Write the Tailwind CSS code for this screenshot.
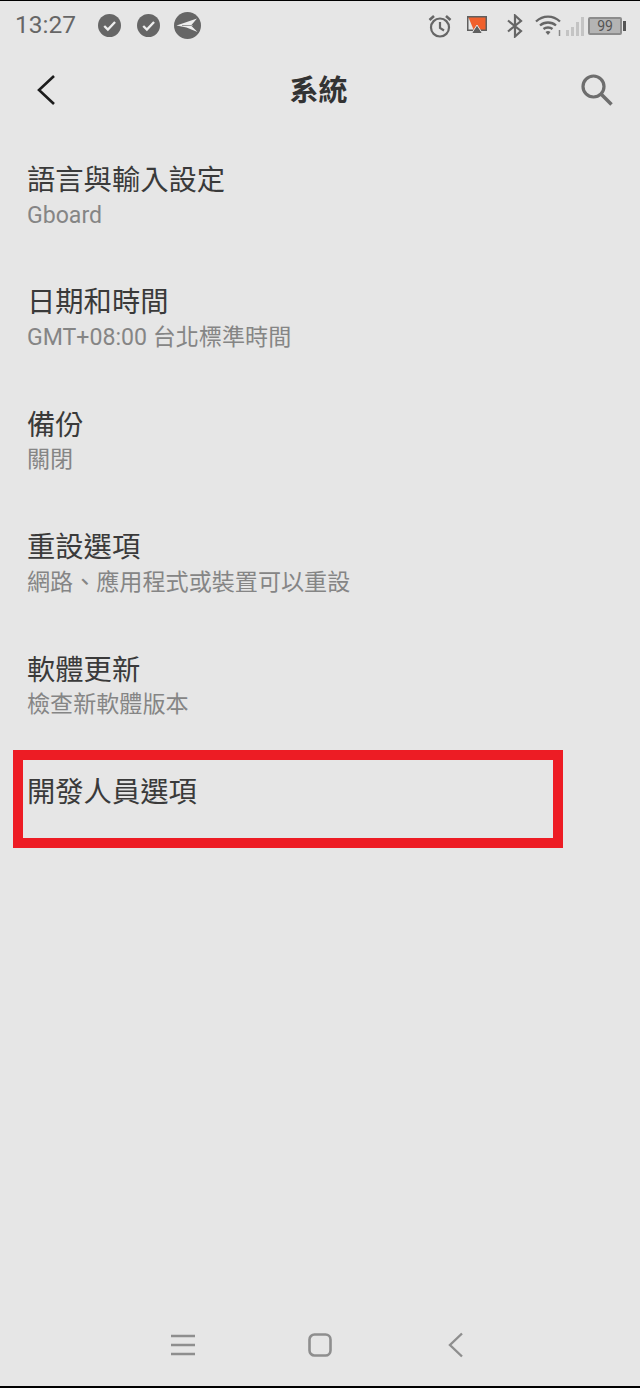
<!DOCTYPE html>
<html lang="zh-Hant">
<head>
<meta charset="utf-8">
<script src="https://cdn.jsdelivr.net/npm/@tailwindcss/browser@4"></script>
</head>
<body class="m-0">
<div class="relative w-[640px] h-[1388px] overflow-hidden flex flex-col bg-[#e6e6e6] border-t border-b-2 border-black font-['Roboto','Noto_Sans_CJK_TC',sans-serif]">
  <!-- status bar -->
  <div class="h-[49px] flex items-center pl-[15px] pr-[14px] shrink-0">
    <span class="text-[24.500px] leading-none text-[#666666] w-[83px]">13:27</span>
    <svg class="w-[23px] h-[23px] mr-[16px]" viewBox="0 0 24 24"><circle cx="12" cy="12" r="12" fill="#666"/><path d="M6.500 12.500l3.800 3.800 7.500-8" fill="none" stroke="#eee" stroke-width="2.400"/></svg>
    <svg class="w-[23px] h-[23px] mr-[14px]" viewBox="0 0 24 24"><circle cx="12" cy="12" r="12" fill="#666"/><path d="M6.500 12.500l3.800 3.800 7.500-8" fill="none" stroke="#eee" stroke-width="2.400"/></svg>
    <svg class="w-[27px] h-[27px]" viewBox="0 0 27 27"><circle cx="13.500" cy="13.500" r="13.500" fill="#666"/><path d="M2.500 13.500L23 6.500l-6 7 6.500 6.500-11-4.500z" fill="#eee"/><path d="M8 13.500h11" stroke="#999" stroke-width="1"/></svg>
    <div class="flex-1"></div>
    <svg class="w-[24px] h-[24px] mr-[14px]" viewBox="0 0 24 24" fill="none" stroke="#666" stroke-width="2.200"><circle cx="12" cy="13.500" r="9"/><path d="M12 8v6l4 2.500"/><path d="M1.500 6L6 2M22.500 6L18 2" stroke-width="2.600"/></svg>
    <svg class="w-[22px] h-[22px] mr-[18px]" viewBox="0 0 22 22"><path d="M1 1h20v15H1z" fill="#5f5f5f"/><path d="M2.500 2.500h17v12h-13z" fill="#f0602c"/><path d="M2.500 2.500l5 12h-5z" fill="#e6e6e6"/><path d="M11 10l5.500 8.500h-11z" fill="#5f5f5f" stroke="#e6e6e6"/></svg>
    <svg class="w-[18px] h-[24px] mr-[11px]" viewBox="0 0 18 24" fill="none" stroke="#666" stroke-width="2.200"><path d="M2 6.500l13 10.500-6 5.500V1.500l6 5.500L2 17.500"/></svg>
    <svg class="w-[27px] h-[22px] mr-[3px]" viewBox="0 0 27 22" fill="none" stroke="#666" stroke-width="2.300"><path d="M1 6.500c7-6.500 17-6.500 24 0M5 10.500c4.500-4 11.500-4 16 0M8.500 14c2.500-2 6.500-2 9 0"/><path d="M10.500 17l2.500 3 2.500-3a4 4 0 0 0-5 0z" fill="#666" stroke="none"/><path d="M24.500 15v6" stroke-width="1.500" stroke="#888"/></svg>
    <svg class="w-[20px] h-[22px] mr-[3px]" viewBox="0 0 20 22" fill="#c4c4c4"><rect x="1" y="15" width="3" height="6"/><rect x="6" y="12" width="3" height="9"/><rect x="11" y="7" width="3" height="14"/><rect x="16" y="2" width="3" height="19"/></svg>
    <div class="w-[34px] h-[18px] rounded-[2px] border-2 border-[#8c8c8c] bg-[#b4b4b4] flex items-center justify-center text-[14px] leading-none text-[#555555]">99</div>
    <div class="w-[3px] h-[10px] ml-[1px] bg-[#555555]"></div>
  </div>
  <!-- toolbar -->
  <div class="h-[80px] grid grid-cols-[1fr_auto_1fr] items-center pl-[36px] pr-[26px] shrink-0">
    <svg class="w-[20px] h-[32px]" viewBox="0 0 20 32" fill="none" stroke="#1c1c1c" stroke-width="2.600"><path d="M18 2L3 16l15 14"/></svg>
    <span class="text-[29px] leading-none font-bold text-[#333333] mt-[3px] mr-[13px]">系統</span>
    <svg class="w-[34px] h-[34px] justify-self-end" viewBox="0 0 34 34" fill="none" stroke="#6e6e6e" stroke-width="3.200"><circle cx="13.500" cy="13.500" r="10.500"/><path d="M21 21l10.500 10.500" stroke-width="3.600"/></svg>
  </div>
  <!-- list -->
  <div class="flex flex-col px-[27px] pt-[31px]">
    <div class="h-[122.400px]">
      <div class="text-[28.300px] leading-[39px] text-[#3a3a3a]">語言與輸入設定</div>
      <div class="text-[23.100px] leading-[29px] mt-[0.500px] text-[#858585]">Gboard</div>
    </div>
    <div class="h-[122.400px]">
      <div class="text-[28.300px] leading-[39px] text-[#3a3a3a]">日期和時間</div>
      <div class="text-[23.100px] leading-[29px] mt-[0.500px] text-[#858585]">GMT+08:00 台北標準時間</div>
    </div>
    <div class="h-[122.400px]">
      <div class="text-[28.300px] leading-[39px] text-[#3a3a3a]">備份</div>
      <div class="text-[23.100px] leading-[29px] mt-[0.500px] text-[#858585]">關閉</div>
    </div>
    <div class="h-[122.400px]">
      <div class="text-[28.300px] leading-[39px] text-[#3a3a3a]">重設選項</div>
      <div class="text-[23.100px] leading-[29px] mt-[0.500px] text-[#858585]">網路、應用程式或裝置可以重設</div>
    </div>
    <div class="h-[122.400px]">
      <div class="text-[28.300px] leading-[39px] text-[#3a3a3a]">軟體更新</div>
      <div class="text-[23.100px] leading-[29px] mt-[0.500px] text-[#858585]">檢查新軟體版本</div>
    </div>
    <div class="h-[122.400px]">
      <div class="text-[28.300px] leading-[39px] text-[#3a3a3a]">開發人員選項</div>
    </div>
  </div>
  <!-- red highlight -->
  <div class="absolute left-[13px] top-[749px] w-[550px] h-[98px] border-[10px] border-[#ed1c24]"></div>
  <!-- nav bar -->
  <div class="mt-auto h-[80px] flex items-center pl-[171px] pb-[2px] shrink-0">
    <svg class="w-[24px] h-[24px] mr-[113px]" viewBox="0 0 24 24" stroke="#8e8e8e" stroke-width="2.400"><path d="M0 3h24M0 12h24M0 21h24"/></svg>
    <svg class="w-[24px] h-[24px] mr-[116px]" viewBox="0 0 24 24" fill="none" stroke="#8e8e8e" stroke-width="2.600"><rect x="1.500" y="1.500" width="21" height="21" rx="5"/></svg>
    <svg class="w-[16px] h-[26px]" viewBox="0 0 16 26" fill="none" stroke="#8e8e8e" stroke-width="2.400"><path d="M14 1.500L2 13l12 11.500"/></svg>
  </div>
</div>
</body>
</html>
